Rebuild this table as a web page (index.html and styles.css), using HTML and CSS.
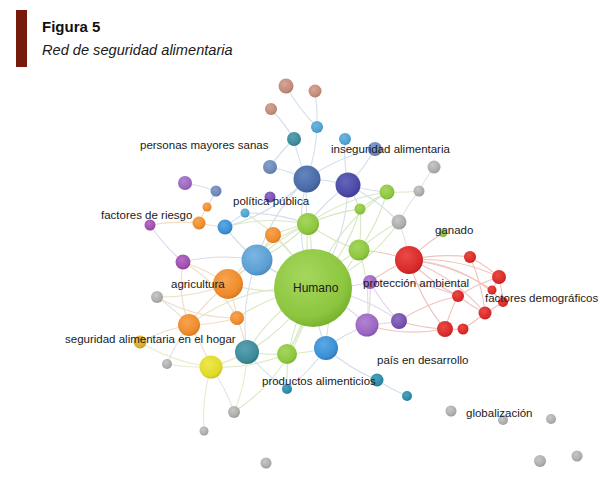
FILE: index.html
```html
<!DOCTYPE html>
<html lang="es">
<head>
<meta charset="utf-8">
<title>Figura 5 - Red de seguridad alimentaria</title>
<link rel="stylesheet" href="styles.css">
</head>
<body>
<header class="fig-head">
  <div class="fig-bar"></div>
  <div class="fig-titles">
    <div class="fig-num">Figura 5</div>
    <div class="fig-caption">Red de seguridad alimentaria</div>
  </div>
</header>
<figure class="net">
<svg class="net-svg" width="612" height="420" viewBox="0 72 612 420" xmlns="http://www.w3.org/2000/svg">
  <defs>
    <radialGradient id="c-green" cx=".4" cy=".35" r=".7"><stop offset="0" stop-color="#a6d65e"/><stop offset=".75" stop-color="#8cc63e"/><stop offset="1" stop-color="#76ac2c"/></radialGradient>
    <radialGradient id="c-red" cx=".4" cy=".35" r=".7"><stop offset="0" stop-color="#ea4a44"/><stop offset=".75" stop-color="#d82a2a"/><stop offset="1" stop-color="#b81e1e"/></radialGradient>
    <radialGradient id="c-orange" cx=".4" cy=".35" r=".7"><stop offset="0" stop-color="#f8a450"/><stop offset=".75" stop-color="#ee8a2c"/><stop offset="1" stop-color="#d2721e"/></radialGradient>
    <radialGradient id="c-lblue" cx=".4" cy=".35" r=".7"><stop offset="0" stop-color="#7cb6e2"/><stop offset=".75" stop-color="#5b9fd3"/><stop offset="1" stop-color="#4886bc"/></radialGradient>
    <radialGradient id="c-blue" cx=".4" cy=".35" r=".7"><stop offset="0" stop-color="#5ca8e4"/><stop offset=".75" stop-color="#3a8fd4"/><stop offset="1" stop-color="#2a74b6"/></radialGradient>
    <radialGradient id="c-steel" cx=".4" cy=".35" r=".7"><stop offset="0" stop-color="#6684bc"/><stop offset=".75" stop-color="#4a6aa8"/><stop offset="1" stop-color="#3a5690"/></radialGradient>
    <radialGradient id="c-navy" cx=".4" cy=".35" r=".7"><stop offset="0" stop-color="#6464ba"/><stop offset=".75" stop-color="#4a4aa6"/><stop offset="1" stop-color="#383890"/></radialGradient>
    <radialGradient id="c-purple" cx=".4" cy=".35" r=".7"><stop offset="0" stop-color="#b284d2"/><stop offset=".75" stop-color="#9a66c0"/><stop offset="1" stop-color="#804ea6"/></radialGradient>
    <radialGradient id="c-dpurple" cx=".4" cy=".35" r=".7"><stop offset="0" stop-color="#9070c2"/><stop offset=".75" stop-color="#7650ac"/><stop offset="1" stop-color="#5e3c92"/></radialGradient>
    <radialGradient id="c-magenta" cx=".4" cy=".35" r=".7"><stop offset="0" stop-color="#b86cc4"/><stop offset=".75" stop-color="#a04eae"/><stop offset="1" stop-color="#863a94"/></radialGradient>
    <radialGradient id="c-teal" cx=".4" cy=".35" r=".7"><stop offset="0" stop-color="#5aa2b2"/><stop offset=".75" stop-color="#3d8a9a"/><stop offset="1" stop-color="#2e7080"/></radialGradient>
    <radialGradient id="c-cteal" cx=".4" cy=".35" r=".7"><stop offset="0" stop-color="#48a2be"/><stop offset=".75" stop-color="#2c8aa8"/><stop offset="1" stop-color="#1e708c"/></radialGradient>
    <radialGradient id="c-gray" cx=".4" cy=".35" r=".7"><stop offset="0" stop-color="#c8c8c8"/><stop offset=".75" stop-color="#ababab"/><stop offset="1" stop-color="#929292"/></radialGradient>
    <radialGradient id="c-brown" cx=".4" cy=".35" r=".7"><stop offset="0" stop-color="#d6a696"/><stop offset=".75" stop-color="#c08a78"/><stop offset="1" stop-color="#a87060"/></radialGradient>
    <radialGradient id="c-yellow" cx=".4" cy=".35" r=".7"><stop offset="0" stop-color="#eee850"/><stop offset=".75" stop-color="#e0da2a"/><stop offset="1" stop-color="#c8c01c"/></radialGradient>
    <radialGradient id="c-gold" cx=".4" cy=".35" r=".7"><stop offset="0" stop-color="#e6c44a"/><stop offset=".75" stop-color="#d6ae2c"/><stop offset="1" stop-color="#bc961c"/></radialGradient>
    <radialGradient id="c-sky" cx=".4" cy=".35" r=".7"><stop offset="0" stop-color="#6cb6de"/><stop offset=".75" stop-color="#4ea2d0"/><stop offset="1" stop-color="#3a88b6"/></radialGradient>
    <radialGradient id="c-slate" cx=".4" cy=".35" r=".7"><stop offset="0" stop-color="#86a0cc"/><stop offset=".75" stop-color="#6a86b8"/><stop offset="1" stop-color="#566ea0"/></radialGradient>
  </defs>

  <g class="edges e-green">
    <path d="M313 288A180 180 0 0 1 308 224"/>
    <path d="M313 288A180 180 0 0 1 359 250"/>
    <path d="M313 288A180 180 0 0 0 360 209"/>
    <path d="M313 288A180 180 0 0 1 387 192"/>
    <path d="M313 288A180 180 0 0 1 287 354"/>
    <path d="M313 288A180 180 0 0 0 247 352"/>
    <path d="M313 288A180 180 0 0 1 211 367"/>
    <path d="M313 288A180 180 0 0 0 273 235"/>
    <path d="M313 288A180 180 0 0 1 228 284"/>
    <path d="M313 288A180 180 0 0 0 237 318"/>
    <path d="M313 288A180 180 0 0 0 189 325"/>
    <path d="M313 288A180 180 0 0 0 399 222"/>
    <path d="M313 288A180 180 0 0 1 234 412"/>
    <path d="M313 288A180 180 0 0 0 287 389"/>
    <path d="M313 288A180 180 0 0 1 225 227"/>
    <path d="M313 288A180 180 0 0 0 245 213"/>
    <path d="M308 224A180 180 0 0 1 360 209"/>
    <path d="M308 224A180 180 0 0 0 359 250"/>
    <path d="M308 224A180 180 0 0 1 387 192"/>
    <path d="M308 224A180 180 0 0 0 273 235"/>
    <path d="M308 224A180 180 0 0 1 257 260"/>
    <path d="M359 250A180 180 0 0 1 399 222"/>
    <path d="M359 250A180 180 0 0 0 360 209"/>
    <path d="M360 209A180 180 0 0 1 387 192"/>
    <path d="M387 192A180 180 0 0 0 419 191"/>
    <path d="M287 354A180 180 0 0 1 247 352"/>
    <path d="M287 354A180 180 0 0 0 326 348"/>
    <path d="M308 224A180 180 0 0 0 225 227"/>
    <path d="M359 250A180 180 0 0 1 367 325"/>
    <path d="M308 224A180 180 0 0 0 228 284"/>
    <path d="M360 209A180 180 0 0 0 257 260"/>
    <path d="M387 192A180 180 0 0 1 359 250"/>
    <path d="M308 224A180 180 0 0 1 287 354"/>
    <path d="M359 250A180 180 0 0 0 326 348"/>
    <path d="M287 354A180 180 0 0 1 211 367"/>
  </g>
  <g class="edges e-blue">
    <path d="M313 288A180 180 0 0 1 307 179"/>
    <path d="M313 288A180 180 0 0 0 348 185"/>
    <path d="M313 288A180 180 0 0 1 257 260"/>
    <path d="M313 288A180 180 0 0 0 326 348"/>
    <path d="M307 179A180 180 0 0 1 294 139"/>
    <path d="M307 179A180 180 0 0 0 317 127"/>
    <path d="M307 179A180 180 0 0 0 270 167"/>
    <path d="M307 179A180 180 0 0 1 348 185"/>
    <path d="M307 179A180 180 0 0 0 308 224"/>
    <path d="M307 179A180 180 0 0 1 375 149"/>
    <path d="M307 179A180 180 0 0 0 257 260"/>
    <path d="M348 185A180 180 0 0 1 345 139"/>
    <path d="M348 185A180 180 0 0 0 375 149"/>
    <path d="M348 185A180 180 0 0 0 387 192"/>
    <path d="M348 185A180 180 0 0 1 360 209"/>
    <path d="M317 127A180 180 0 0 0 315 91"/>
    <path d="M294 139A180 180 0 0 0 271 109"/>
    <path d="M317 127A180 180 0 0 1 286 86"/>
    <path d="M257 260A180 180 0 0 1 225 227"/>
    <path d="M225 227A180 180 0 0 1 245 213"/>
    <path d="M185 183A180 180 0 0 1 216 191"/>
    <path d="M216 191A180 180 0 0 1 207 207"/>
    <path d="M326 348A180 180 0 0 0 377 380"/>
    <path d="M377 380A180 180 0 0 0 407 396"/>
    <path d="M326 348A180 180 0 0 1 367 325"/>
    <path d="M270 167A180 180 0 0 1 294 139"/>
    <path d="M247 352A180 180 0 0 0 287 389"/>
    <path d="M348 185A180 180 0 0 0 308 224"/>
    <path d="M245 213A180 180 0 0 1 308 224"/>
    <path d="M257 260A180 180 0 0 0 247 352"/>
    <path d="M307 179A180 180 0 0 1 225 227"/>
    <path d="M348 185A180 180 0 0 1 399 222"/>
    <path d="M326 348A180 180 0 0 1 287 389"/>
  </g>
  <g class="edges e-gray">
    <path d="M434 167A180 180 0 0 0 419 191"/>
    <path d="M399 222A180 180 0 0 1 419 191"/>
    <path d="M211 367A180 180 0 0 1 234 412"/>
    <path d="M157 297A180 180 0 0 1 189 325"/>
    <path d="M167 364A180 180 0 0 1 189 325"/>
    <path d="M399 222A180 180 0 0 1 409 260"/>
  </g>
  <g class="edges e-orange">
    <path d="M228 284A180 180 0 0 0 183 262"/>
    <path d="M228 284A180 180 0 0 1 157 297"/>
    <path d="M228 284A180 180 0 0 0 189 325"/>
    <path d="M228 284A180 180 0 0 1 237 318"/>
    <path d="M228 284A180 180 0 0 1 257 260"/>
    <path d="M228 284A180 180 0 0 0 273 235"/>
    <path d="M189 325A180 180 0 0 0 140 342"/>
    <path d="M189 325A180 180 0 0 1 211 367"/>
    <path d="M189 325A180 180 0 0 0 237 318"/>
    <path d="M237 318A180 180 0 0 1 247 352"/>
    <path d="M199 223A180 180 0 0 1 207 207"/>
    <path d="M199 223A180 180 0 0 0 225 227"/>
    <path d="M150 225A180 180 0 0 1 199 223"/>
    <path d="M183 262A120 120 0 0 0 189 325"/>
    <path d="M273 235A180 180 0 0 0 257 260"/>
    <path d="M183 262A140 140 0 0 1 237 318"/>
    <path d="M157 297A160 160 0 0 0 237 318"/>
  </g>
  <g class="edges e-red">
    <path d="M409 260A180 180 0 0 1 470 257"/>
    <path d="M409 260A180 180 0 0 1 499 277"/>
    <path d="M409 260A180 180 0 0 0 458 296"/>
    <path d="M409 260A180 180 0 0 0 445 329"/>
    <path d="M409 260A180 180 0 0 1 485 313"/>
    <path d="M409 260A180 180 0 0 1 443 233"/>
    <path d="M409 260A180 180 0 0 0 370 282"/>
    <path d="M409 260A180 180 0 0 0 359 250"/>
    <path d="M470 257A180 180 0 0 1 499 277"/>
    <path d="M499 277A180 180 0 0 1 492 290"/>
    <path d="M499 277A180 180 0 0 1 503 302"/>
    <path d="M458 296A180 180 0 0 0 485 313"/>
    <path d="M485 313A180 180 0 0 0 503 302"/>
    <path d="M445 329A180 180 0 0 0 463 329"/>
    <path d="M463 329A180 180 0 0 0 485 313"/>
    <path d="M458 296A180 180 0 0 0 445 329"/>
    <path d="M458 296A180 180 0 0 1 499 277"/>
    <path d="M399 321A180 180 0 0 0 445 329"/>
    <path d="M399 321A180 180 0 0 1 458 296"/>
    <path d="M367 325A160 160 0 0 0 445 329"/>
    <path d="M470 257A180 180 0 0 1 485 313"/>
    <path d="M409 260A180 180 0 0 1 492 290"/>
    <path d="M409 260A140 140 0 0 1 503 302"/>
    <path d="M370 282A180 180 0 0 1 458 296"/>
  </g>
  <g class="edges e-purple">
    <path d="M367 325A180 180 0 0 0 399 321"/>
    <path d="M370 282A180 180 0 0 1 367 325"/>
    <path d="M313 288A180 180 0 0 0 370 282"/>
    <path d="M313 288A180 180 0 0 1 367 325"/>
    <path d="M313 288A180 180 0 0 1 399 321"/>
    <path d="M183 262A180 180 0 0 1 257 260"/>
    <path d="M370 282A180 180 0 0 0 399 321"/>
    <path d="M150 225A180 180 0 0 0 183 262"/>
  </g>
  <g class="edges e-yellow">
    <path d="M211 367A180 180 0 0 0 247 352"/>
    <path d="M211 367A180 180 0 0 0 204 431"/>
    <path d="M211 367A180 180 0 0 1 167 364"/>
    <path d="M140 342A180 180 0 0 0 211 367"/>
    <path d="M247 352A160 160 0 0 1 234 412"/>
  </g>

  <g class="nodes">
    <circle class="n-brown" cx="286" cy="86" r="7.5"/>
    <circle class="n-brown" cx="315" cy="91" r="6.5"/>
    <circle class="n-brown" cx="271" cy="109" r="6"/>
    <circle class="n-sky" cx="317" cy="127" r="6"/>
    <circle class="n-teal" cx="294" cy="139" r="7"/>
    <circle class="n-sky" cx="345" cy="139" r="6"/>
    <circle class="n-slate" cx="375" cy="149" r="7"/>
    <circle class="n-gray" cx="434" cy="167" r="6.5"/>
    <circle class="n-slate" cx="270" cy="167" r="7"/>
    <circle class="n-steel" cx="307" cy="179" r="13.5"/>
    <circle class="n-navy" cx="348" cy="185" r="12.5"/>
    <circle class="n-green" cx="387" cy="192" r="7.5"/>
    <circle class="n-gray" cx="419" cy="191" r="5.5"/>
    <circle class="n-purple" cx="185" cy="183" r="7"/>
    <circle class="n-slate" cx="216" cy="191" r="5.5"/>
    <circle class="n-dpurple" cx="270" cy="197" r="5.5"/>
    <circle class="n-orange" cx="207" cy="207" r="4.5"/>
    <circle class="n-sky" cx="245" cy="213" r="4.5"/>
    <circle class="n-green" cx="360" cy="209" r="5.5"/>
    <circle class="n-gray" cx="399" cy="222" r="7.5"/>
    <circle class="n-orange" cx="199" cy="223" r="6.5"/>
    <circle class="n-blue" cx="225" cy="227" r="7.5"/>
    <circle class="n-green" cx="308" cy="224" r="11"/>
    <circle class="n-magenta" cx="150" cy="225" r="5.5"/>
    <circle class="n-orange" cx="273" cy="235" r="8"/>
    <circle class="n-green" cx="443" cy="233" r="4"/>
    <circle class="n-green" cx="359" cy="250" r="10.5"/>
    <circle class="n-red" cx="409" cy="260" r="14"/>
    <circle class="n-red" cx="470" cy="257" r="6"/>
    <circle class="n-magenta" cx="183" cy="262" r="7.5"/>
    <circle class="n-lblue" cx="257" cy="260" r="15.5"/>
    <circle class="n-red" cx="499" cy="277" r="7"/>
    <circle class="n-green" cx="313" cy="288" r="39"/>
    <circle class="n-orange" cx="228" cy="284" r="15"/>
    <circle class="n-purple" cx="370" cy="282" r="7"/>
    <circle class="n-red" cx="492" cy="290" r="4.5"/>
    <circle class="n-red" cx="458" cy="296" r="6"/>
    <circle class="n-gray" cx="157" cy="297" r="6"/>
    <circle class="n-red" cx="503" cy="302" r="5"/>
    <circle class="n-red" cx="485" cy="313" r="6.5"/>
    <circle class="n-orange" cx="237" cy="318" r="7"/>
    <circle class="n-dpurple" cx="399" cy="321" r="8"/>
    <circle class="n-orange" cx="189" cy="325" r="11"/>
    <circle class="n-purple" cx="367" cy="325" r="11.5"/>
    <circle class="n-red" cx="445" cy="329" r="8"/>
    <circle class="n-red" cx="463" cy="329" r="5.5"/>
    <circle class="n-gold" cx="140" cy="342" r="6.5"/>
    <circle class="n-blue" cx="326" cy="348" r="12"/>
    <circle class="n-teal" cx="247" cy="352" r="12"/>
    <circle class="n-green" cx="287" cy="354" r="10"/>
    <circle class="n-gray" cx="167" cy="364" r="5"/>
    <circle class="n-yellow" cx="211" cy="367" r="11.5"/>
    <circle class="n-cteal" cx="377" cy="380" r="6.5"/>
    <circle class="n-cteal" cx="287" cy="389" r="5"/>
    <circle class="n-cteal" cx="407" cy="396" r="5"/>
    <circle class="n-gray" cx="234" cy="412" r="6"/>
    <circle class="n-gray" cx="204" cy="431" r="4.5"/>
    <circle class="n-gray" cx="451" cy="411" r="5.5"/>
    <circle class="n-gray" cx="503" cy="420" r="5"/>
    <circle class="n-gray" cx="551" cy="419" r="5"/>
    <circle class="n-gray" cx="266" cy="463" r="5.5"/>
    <circle class="n-gray" cx="540" cy="461" r="6"/>
    <circle class="n-gray" cx="577" cy="456" r="5.5"/>
  </g>

  <g class="labels">
    <text x="140" y="149">personas mayores sanas</text>
    <text x="331" y="153">inseguridad alimentaria</text>
    <text x="233" y="205">política pública</text>
    <text x="101" y="219">factores de riesgo</text>
    <text x="435" y="234">ganado</text>
    <text x="171" y="288">agricultura</text>
    <text class="hub" x="293" y="292">Humano</text>
    <text x="363" y="287">protección ambiental</text>
    <text x="485" y="302">factores demográficos</text>
    <text x="65" y="343">seguridad alimentaria en el hogar</text>
    <text x="377" y="364">país en desarrollo</text>
    <text x="262" y="385">productos alimenticios</text>
    <text x="466" y="417">globalización</text>
  </g>
</svg>
</figure>
</body>
</html>
```

FILE: styles.css
```css
html, body {
  margin: 0;
  padding: 0;
  background: #ffffff;
}

body {
  width: 612px;
  height: 492px;
  overflow: hidden;
  font-family: "Liberation Sans", Arial, sans-serif;
  color: #111111;
}

.fig-head {
  display: flex;
  align-items: flex-start;
  gap: 15px;
  height: 72px;
  box-sizing: border-box;
  padding: 10px 0 0 16px;
}

.fig-bar {
  width: 11px;
  height: 57px;
  background: #761a0c;
  flex: none;
}

.fig-titles {
  padding-top: 7px;
}

.fig-num {
  font-size: 15px;
  font-weight: bold;
  line-height: 20px;
  color: #111111;
}

.fig-caption {
  margin-top: 3px;
  font-size: 14.6px;
  font-style: italic;
  line-height: 20px;
  color: #1a1a1a;
}

.net {
  margin: 0;
  padding: 0;
}

.net-svg {
  display: block;
}

.edges path {
  fill: none;
  stroke-width: 1.1;
}

.e-green path { stroke: #d8e9c3; }
.e-blue path { stroke: #d3dfeb; }
.e-gray path { stroke: #e3e3e3; }
.e-orange path { stroke: #f3dcc6; }
.e-red path { stroke: #efc3bf; }
.e-purple path { stroke: #e1d5ea; }
.e-yellow path { stroke: #ebe9cc; }

.n-green { fill: url(#c-green); }
.n-red { fill: url(#c-red); }
.n-orange { fill: url(#c-orange); }
.n-lblue { fill: url(#c-lblue); }
.n-blue { fill: url(#c-blue); }
.n-steel { fill: url(#c-steel); }
.n-navy { fill: url(#c-navy); }
.n-purple { fill: url(#c-purple); }
.n-dpurple { fill: url(#c-dpurple); }
.n-magenta { fill: url(#c-magenta); }
.n-teal { fill: url(#c-teal); }
.n-cteal { fill: url(#c-cteal); }
.n-gray { fill: url(#c-gray); }
.n-brown { fill: url(#c-brown); }
.n-yellow { fill: url(#c-yellow); }
.n-gold { fill: url(#c-gold); }
.n-sky { fill: url(#c-sky); }
.n-slate { fill: url(#c-slate); }

.labels text {
  font-family: "Liberation Sans", Arial, sans-serif;
  font-size: 11.5px;
  fill: #1a1a1a;
}

.labels .hub {
  font-size: 12px;
}
```
